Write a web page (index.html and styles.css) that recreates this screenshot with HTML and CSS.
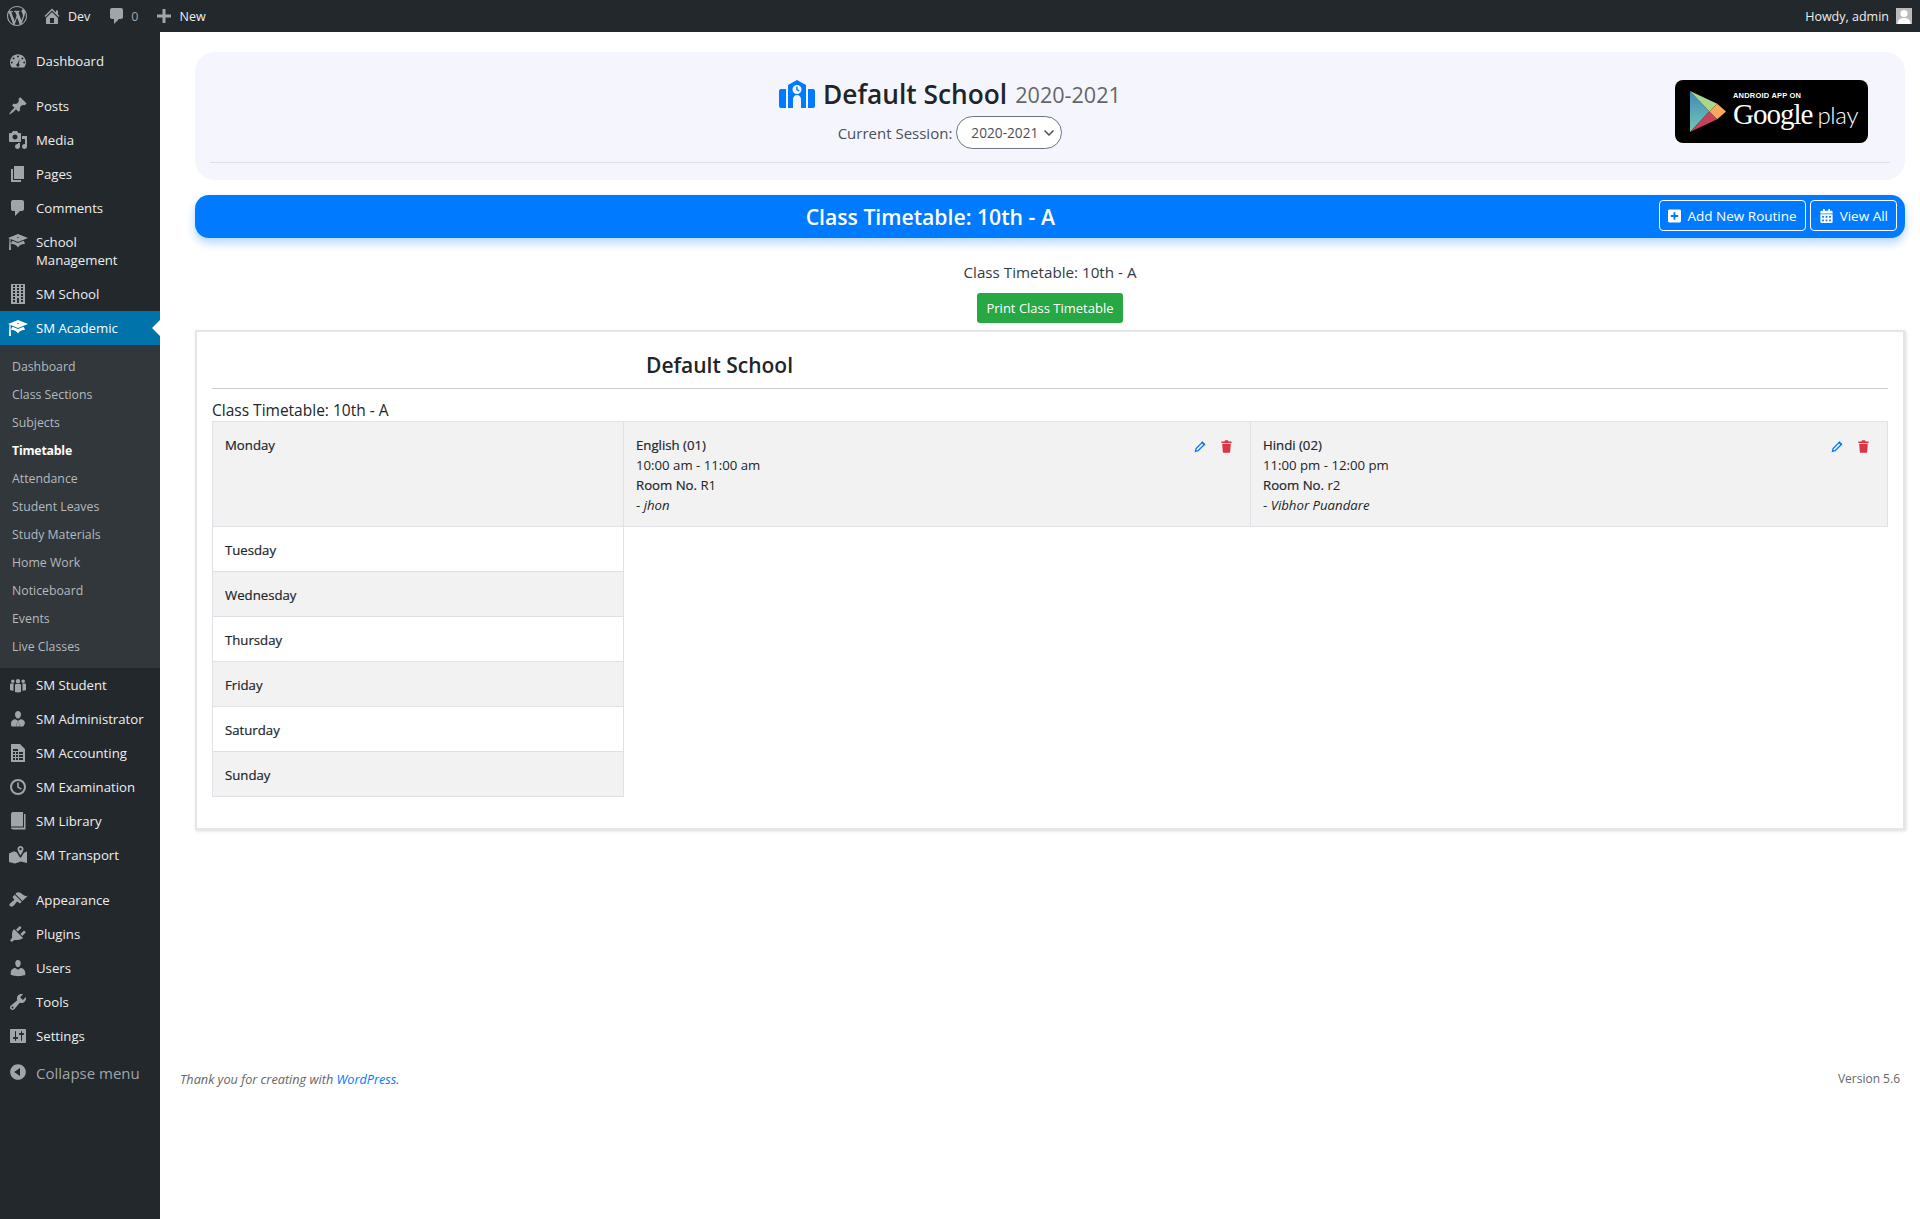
FILE: index.html
```html
<!DOCTYPE html>
<html lang="en">
<head>
    <meta charset="UTF-8">
    <title>Class Timetable</title>
    <link rel="stylesheet" href="styles.css">
</head>
<body>

    <svg class="icon-defs" aria-hidden="true">
        <defs>
            <linearGradient id="play-blue" x1="0" y1="0" x2="0" y2="1">
                <stop offset="0" stop-color="#3f87b8"/>
                <stop offset="1" stop-color="#74c9b4"/>
            </linearGradient>
        </defs>
        <symbol id="i-wp" viewBox="0 0 20 20"><path d="M20 10c0-5.51-4.49-10-10-10C4.48 0 0 4.49 0 10c0 5.52 4.48 10 10 10 5.51 0 10-4.48 10-10zM7.78 15.37L4.37 6.22c.55-.02 1.17-.08 1.17-.08.5-.06.44-1.13-.06-1.11 0 0-1.45.11-2.37.11-.18 0-.37 0-.58-.01C4.12 2.69 6.87 1.11 10 1.11c2.33 0 4.45.87 6.05 2.34-.68-.11-1.65.39-1.65 1.58 0 .74.45 1.36.9 2.1.35.61.55 1.36.55 2.46 0 1.49-1.4 5-1.4 5l-3.03-8.37c.54-.02.82-.17.82-.17.5-.05.44-1.25-.06-1.22 0 0-1.44.12-2.38.12-.87 0-2.33-.12-2.33-.12-.5-.03-.56 1.2-.06 1.22l.92.08 1.26 3.41zM17.41 10c.24-.64.74-1.87.43-4.25.7 1.29 1.05 2.71 1.05 4.25 0 3.29-1.73 6.24-4.4 7.78.97-2.59 1.94-5.2 2.92-7.78zM6.1 18.09C3.12 16.65 1.11 13.53 1.11 10c0-1.3.23-2.48.72-3.59C3.25 10.3 4.67 14.2 6.1 18.09zm4.03-6.63l2.58 6.98c-.86.29-1.76.45-2.71.45-.79 0-1.57-.11-2.29-.33.81-2.38 1.62-4.74 2.42-7.1z"/></symbol>
        <symbol id="i-home" viewBox="0 0 20 20"><path d="M16 8.5l1.53 1.53-1.06 1.06L10 4.62l-6.47 6.47-1.06-1.06L10 2.5l4 4v-2h2v4zm-6-2.46l6 5.99V18H4v-5.97zM12 17v-5H8v5h4z"/></symbol>
        <symbol id="i-comment" viewBox="0 0 20 20"><path d="M5 2h9c1.1 0 2 .9 2 2v7c0 1.1-.9 2-2 2h-2l-5 5v-5H5c-1.1 0-2-.9-2-2V4c0-1.1.9-2 2-2z"/></symbol>
        <symbol id="i-plus" viewBox="0 0 20 20"><path d="M17 8.5v3h-5.500V17h-3v-5.500H3v-3h5.500V3h3v5.500z"/></symbol>
        <symbol id="i-gauge" viewBox="0 0 20 20"><path fill-rule="evenodd" d="M3.8 16.5h12.4c1.1-1.4 1.8-3.2 1.8-5.2 0-4.4-3.6-8-8-8s-8 3.6-8 8c0 2 .7 3.8 1.8 5.2zM10 4.6a1 1 0 1 1 0 2 1 1 0 0 1 0-2zM5.6 6.4a1 1 0 1 1 0 2 1 1 0 0 1 0-2zM14.4 6.4a1 1 0 1 1 0 2 1 1 0 0 1 0-2zM3.8 10.6a1 1 0 1 1 0 2 1 1 0 0 1 0-2zM16.2 10.6a1 1 0 1 1 0 2 1 1 0 0 1 0-2zM11.8 7.8l-.9 4.9a1.6 1.6 0 1 1-1.4-.3z"/></symbol>
        <symbol id="i-pin" viewBox="0 0 20 20"><path d="M10.44 3.02l1.82-1.82 6.36 6.35-1.83 1.82c-1.05-.68-2.48-.57-3.41.36l-.75.75c-.92.93-1.04 2.35-.35 3.41l-1.83 1.82-2.41-2.41-2.8 2.79c-.42.42-3.38 2.71-3.8 2.29s1.86-3.39 2.28-3.81l2.79-2.79L4.1 9.36l1.83-1.82c1.05.69 2.48.57 3.4-.36l.75-.75c.93-.92 1.05-2.35.36-3.41z"/></symbol>
        <symbol id="i-media" viewBox="0 0 20 20"><path d="M13 11V4c0-.55-.45-1-1-1h-1.67L9 1H5L3.67 3H2c-.55 0-1 .45-1 1v7c0 .55.45 1 1 1h10c.55 0 1-.45 1-1zM7 4.5c1.38 0 2.5 1.12 2.5 2.5S8.38 9.5 7 9.5 4.5 8.38 4.5 7 5.62 4.5 7 4.5zM14 6h5v10.5c0 1.38-1.12 2.5-2.5 2.5S14 17.88 14 16.5s1.12-2.5 2.5-2.5c.17 0 .34.02.5.05V9h-3V6zm-4 8.05V13h2v3.5c0 1.38-1.12 2.5-2.5 2.5S7 17.88 7 16.5 8.12 14 9.5 14c.17 0 .34.02.5.05z"/></symbol>
        <symbol id="i-pages" viewBox="0 0 20 20"><path d="M6 15V2h10v13H6zm-1 1h8v2H3V5h2v11z"/></symbol>
        <symbol id="i-cap" viewBox="0 0 20 20"><path d="M10 10L2.54 7.02 3 18H1l.48-11.41L0 6l10-4 10 4zm0-5c-.55 0-1 .22-1 .5s.45.5 1 .5 1-.22 1-.5-.45-.5-1-.5zm0 6l5.57-2.23c.71.94 1.2 2.07 1.36 3.3-.3-.04-.61-.07-.93-.07-2.55 0-4.78 1.37-6 3.41C8.78 13.37 6.55 12 4 12c-.32 0-.63.03-.93.07.16-1.23.65-2.36 1.36-3.3z"/></symbol>
        <symbol id="i-building" viewBox="0 0 20 20"><path fill-rule="evenodd" d="M3 20h14V0H3v20zM7 3H5V1h2v2zm4 0H9V1h2v2zm4 0h-2V1h2v2zM7 6H5V4h2v2zm4 0H9V4h2v2zm4 0h-2V4h2v2zM7 9H5V7h2v2zm4 0H9V7h2v2zm4 0h-2V7h2v2zm-8 3H5v-2h2v2zm4 0H9v-2h2v2zm4 0h-2v-2h2v2zm-4 7H9v-5h2v5zm-4-4H5v-2h2v2zm8 0h-2v-2h2v2zm-8 3H5v-2h2v2zm8 0h-2v-2h2v2z"/></symbol>
        <symbol id="i-groups" viewBox="0 0 20 20"><path d="M10 8.5a2.2 2.2 0 1 0 0-4.4 2.2 2.2 0 0 0 0 4.4zM4.8 8a1.8 1.8 0 1 0 0-3.6 1.8 1.8 0 0 0 0 3.6zM15.2 8a1.8 1.8 0 1 0 0-3.6 1.8 1.8 0 0 0 0 3.6zM7 10c0-.5.6-1 1.200-1h3.600c.6 0 1.200.5 1.200 1v7c-2 .6-4 .6-6 0zM2 9.500c0-.5.5-1 1-1h3c-.3.4-.5.9-.5 1.500v5.800c-1.400-.1-2.600-.4-3.500-.8zM18 9.500c0-.5-.5-1-1-1h-3c.3.4.5.9.5 1.500v5.800c1.400-.1 2.600-.4 3.500-.8z"/></symbol>
        <symbol id="i-man" viewBox="0 0 20 20"><path d="M7 5.500C7 3.500 8.300 2 10 2s3 1.500 3 3.500S11.700 9.500 10 9.500 7 7.500 7 5.500zM3 14.500c0-2.500 1.800-4.300 4.500-4.300l1.700 1-.7 6.300H4.500c-.8 0-1.500-.7-1.500-1.500zM17 14.500c0-2.500-1.800-4.300-4.500-4.300l-1.700 1 .7 6.300h3c.8 0 1.500-.7 1.500-1.500zM9.300 11.500h1.400l.5 6H8.800z"/></symbol>
        <symbol id="i-sheet" viewBox="0 0 20 20"><path fill-rule="evenodd" d="M3 1h9l5 5v13H3zM5 6v2h5V6zM5 9v2h2V9zM8 9v2h2V9zM11 9v2h4V9zM5 12v2h2v-2zM8 12v2h2v-2zM11 12v2h4v-2zM5 15v2h2v-2zM8 15v2h2v-2zM11 15v2h4v-2z"/></symbol>
        <symbol id="i-clock" viewBox="0 0 20 20"><path fill-rule="evenodd" d="M10 2a8 8 0 1 1 0 16 8 8 0 0 1 0-16zm0 2a6 6 0 1 0 0 12 6 6 0 0 0 0-12zM9.200 5.500h1.600v4.200l3 1.800-.8 1.300-3.800-2.300z"/></symbol>
        <symbol id="i-book" viewBox="0 0 20 20"><path d="M3 3a2 2 0 0 1 2-2h10v14.500H3zM3 16.500h13V3h1.500v15.500H5c-1.100 0-2-.9-2-2z"/></symbol>
        <symbol id="i-map" viewBox="0 0 20 20"><path fill-rule="evenodd" d="M12.500 1C10.800 1 9.500 2.400 9.500 4c0 2 3 6.500 3 6.500s3-4.500 3-6.500c0-1.600-1.300-3-3-3zm0 1.800a1.200 1.200 0 1 1 0 2.400 1.200 1.200 0 0 1 0-2.400zM1 8.500l5-2.200 3 1.200c.7 1.600 1.800 3.300 3.500 5.500 1.700-2.200 2.600-3.700 3.300-5.200L19 6.500V18l-6-1.500-6 2L1 17z"/></symbol>
        <symbol id="i-brush" viewBox="0 0 20 20"><path d="M14.48 11.06L7.41 3.99l1.5-1.5c.5-.56 2.3-.47 3.51.32 1.21.8 1.43 1.28 2.91 2.1 1.18.64 2.45 1.26 4.45.85zm-.71.71L6.7 4.7 4.93 6.47c-.39.39-.39 1.02 0 1.41l1.06 1.06c.39.39.39 1.03 0 1.42-.6.6-1.43 1.11-2.21 1.69-.35.26-.7.53-1.01.84C1.43 13.23.76 14.7 2 16c1.26 1.26 2.73.59 4.08-.76.31-.31.58-.66.85-1.02.57-.78 1.08-1.61 1.69-2.21.39-.39 1.02-.39 1.41 0l1.06 1.06c.39.39 1.02.39 1.41 0z"/></symbol>
        <symbol id="i-plug" viewBox="0 0 20 20"><path d="M13.11 4.36L9.87 7.6 8 5.73l3.24-3.24c.35-.34 1.05-.2 1.56.32.52.51.66 1.21.31 1.55zm-8 1.77l.91-1.12 9.01 9.01-1.19.84c-.71.71-2.63 1.16-3.82 1.16H6.14L4.9 17.26c-.59.59-1.54.59-2.12 0-.59-.58-.59-1.53 0-2.12l1.24-1.24v-3.88c0-1.13.4-3.19 1.09-3.89zm7.26 3.97l3.24-3.24c.34-.35 1.04-.21 1.55.31.52.51.66 1.21.31 1.55l-3.24 3.25z"/></symbol>
        <symbol id="i-user" viewBox="0 0 20 20"><path d="M10 9.25c-2.27 0-2.73-3.44-2.73-3.44C7 4.02 7.82 2 9.97 2c2.16 0 2.98 2.02 2.71 3.81 0 0-.41 3.44-2.68 3.44zm0 2.57L12.72 10c2.39 0 4.52 2.33 4.52 4.53v2.49s-3.65 1.13-7.24 1.13c-3.65 0-7.24-1.13-7.24-1.13v-2.49c0-2.25 1.94-4.48 4.47-4.48z"/></symbol>
        <symbol id="i-wrench" viewBox="0 0 20 20"><path d="M16.68 9.77c-1.34 1.34-3.3 1.67-4.95.99l-5.41 6.52c-.99.99-2.59.99-3.58 0s-.99-2.59 0-3.57l6.52-5.42c-.68-1.65-.35-3.61.99-4.95 1.28-1.28 3.12-1.62 4.72-1.06l-2.89 2.89 2.82 2.82 2.86-2.87c.53 1.58.18 3.39-1.08 4.65zM3.81 16.21c.4.39 1.04.39 1.43 0 .4-.4.4-1.04 0-1.43-.39-.4-1.03-.4-1.43 0-.39.39-.39 1.03 0 1.43z"/></symbol>
        <symbol id="i-sliders" viewBox="0 0 20 20"><path d="M18 16V4c0-.55-.45-1-1-1H3c-.55 0-1 .45-1 1v12c0 .55.45 1 1 1h14c.55 0 1-.45 1-1zM8 11h1c.55 0 1 .45 1 1s-.45 1-1 1H8v1.500c0 .28-.22.5-.5.5s-.5-.22-.5-.5V13H6c-.55 0-1-.45-1-1s.45-1 1-1h1V5.500c0-.28.22-.5.5-.5s.5.22.5.5V11zm5-2h-1c-.55 0-1-.45-1-1s.45-1 1-1h1V5.500c0-.28.22-.5.5-.5s.5.22.5.5V7h1c.55 0 1 .45 1 1s-.45 1-1 1h-1v5.500c0 .28-.22.5-.5.5s-.5-.22-.5-.5V9z"/></symbol>
        <symbol id="i-collapse" viewBox="0 0 20 20"><path d="M10 2.16c4.33 0 7.84 3.51 7.84 7.84s-3.51 7.84-7.84 7.84S2.16 14.33 2.16 10 5.71 2.16 10 2.16zm2 11.72V6.12L6.18 9.97z"/></symbol>
        <symbol id="i-pencil" viewBox="0 0 16 16"><path fill="none" stroke="currentColor" stroke-width="1.8" d="M11 2.500l2.800 2.800-8.300 8.300L2 14.500l.8-3.700z"/><path d="M11.200 1l4 4-1.600 1.600-4-4z"/></symbol>
        <symbol id="i-trash" viewBox="0 0 14 16"><path d="M5 0h4l.6 1.500h3.900v2H.5v-2h3.900zM1.500 4.500h11l-.8 10.300c0 .7-.6 1.200-1.300 1.200H3.600c-.7 0-1.300-.5-1.300-1.200z"/></symbol>
    </svg>

    <header class="adminbar">
        <div class="adminbar-left">
            <svg class="bar-logo"><use href="#i-wp"/></svg>
            <span class="bar-item item-site"><svg class="bar-icon"><use href="#i-home"/></svg>Dev</span>
            <span class="bar-item"><svg class="bar-icon icon-tight"><use href="#i-comment"/></svg><span class="bar-count">0</span></span>
            <span class="bar-item"><svg class="bar-icon"><use href="#i-plus"/></svg>New</span>
        </div>
        <div class="howdy">
            Howdy, admin
            <span class="avatar"><svg viewBox="0 0 16 16"><circle cx="8" cy="5.5" r="3.5"/><path d="M1.5 16c0-4 2.500-6 6.500-6s6.500 2 6.500 6z"/></svg></span>
        </div>
    </header>

    <div class="layout">
        <aside class="sidebar">
            <ul class="menu">
                <li class="menu-item first"><svg class="menu-icon"><use href="#i-gauge"/></svg>Dashboard</li>
                <li class="menu-item gap"><svg class="menu-icon"><use href="#i-pin"/></svg>Posts</li>
                <li class="menu-item"><svg class="menu-icon"><use href="#i-media"/></svg>Media</li>
                <li class="menu-item"><svg class="menu-icon"><use href="#i-pages"/></svg>Pages</li>
                <li class="menu-item"><svg class="menu-icon"><use href="#i-comment"/></svg>Comments</li>
                <li class="menu-item tall"><svg class="menu-icon"><use href="#i-cap"/></svg><span>School<br>Management</span></li>
                <li class="menu-item"><svg class="menu-icon"><use href="#i-building"/></svg>SM School</li>
                <li class="menu-item active"><svg class="menu-icon"><use href="#i-cap"/></svg>SM Academic</li>
            </ul>
            <ul class="submenu">
                <li>Dashboard</li>
                <li>Class Sections</li>
                <li>Subjects</li>
                <li class="current">Timetable</li>
                <li>Attendance</li>
                <li>Student Leaves</li>
                <li>Study Materials</li>
                <li>Home Work</li>
                <li>Noticeboard</li>
                <li>Events</li>
                <li>Live Classes</li>
            </ul>
            <ul class="menu">
                <li class="menu-item"><svg class="menu-icon"><use href="#i-groups"/></svg>SM Student</li>
                <li class="menu-item"><svg class="menu-icon"><use href="#i-man"/></svg>SM Administrator</li>
                <li class="menu-item"><svg class="menu-icon"><use href="#i-sheet"/></svg>SM Accounting</li>
                <li class="menu-item"><svg class="menu-icon"><use href="#i-clock"/></svg>SM Examination</li>
                <li class="menu-item"><svg class="menu-icon"><use href="#i-book"/></svg>SM Library</li>
                <li class="menu-item"><svg class="menu-icon"><use href="#i-map"/></svg>SM Transport</li>
                <li class="menu-item gap"><svg class="menu-icon"><use href="#i-brush"/></svg>Appearance</li>
                <li class="menu-item"><svg class="menu-icon"><use href="#i-plug"/></svg>Plugins</li>
                <li class="menu-item"><svg class="menu-icon"><use href="#i-user"/></svg>Users</li>
                <li class="menu-item"><svg class="menu-icon"><use href="#i-wrench"/></svg>Tools</li>
                <li class="menu-item"><svg class="menu-icon"><use href="#i-sliders"/></svg>Settings</li>
                <li class="menu-item collapse"><svg class="menu-icon"><use href="#i-collapse"/></svg>Collapse menu</li>
            </ul>
        </aside>

        <main class="content">
            <section class="school-card">
                <div class="school-row">
                    <div class="school-info">
                        <h1 class="school-title">
                            <svg class="school-icon" viewBox="0 0 36 28"><path fill-rule="evenodd" d="M18 0l9 5v23h-5v-9c0-2.200-1.800-4-4-4s-4 1.800-4 4v9H9V5zm0 5a4.500 4.500 0 1 0 0 9 4.500 4.500 0 0 0 0-9zm-.8 1.800h1.400v2.500l1.800 1-.7 1.100-2.500-1.500zM0 11c0-1 .9-2 2-2h5v19H2c-1.100 0-2-.9-2-2zM36 11c0-1-.9-2-2-2h-5v19h5c1.100 0 2-.9 2-2z"/></svg>
                            Default School <small>2020-2021</small>
                        </h1>
                        <div class="session">
                            <span>Current Session:</span>
                            <span class="session-select">2020-2021
                                <svg viewBox="0 0 12 8"><path d="M1.500 1.500L6 6l4.500-4.500"/></svg>
                            </span>
                        </div>
                    </div>
                    <div class="play-badge">
                        <svg class="play-mark" viewBox="0 0 38 44">
                            <path fill="url(#play-blue)" d="M1 1v42l20-21z"/>
                            <path fill="#a8d88c" d="M1 1l20 21 8-8z"/>
                            <path fill="#c8405c" d="M1 43l20-21 8 8z"/>
                            <path fill="#f9a860" d="M21 22l8-8 9 8-9 8z"/>
                        </svg>
                        <div class="play-text">
                            <span class="play-small">ANDROID APP ON</span>
                            <span class="play-big">Google<span class="play-word">play</span></span>
                        </div>
                    </div>
                </div>
                <hr class="school-rule">
            </section>

            <section class="page-bar">
                <h2 class="page-bar-title">Class Timetable: 10th - A</h2>
                <div class="page-bar-actions">
                    <a class="bar-btn">
                        <svg viewBox="0 0 14 14"><path fill-rule="evenodd" d="M1.500 0h11c.8 0 1.500.7 1.500 1.500v11c0 .8-.7 1.500-1.500 1.500h-11C.7 14 0 13.300 0 12.500v-11C0 .7.700 0 1.500 0zM6 3v3H3v2h3v3h2V8h3V6H8V3z"/></svg>
                        Add New Routine
                    </a>
                    <a class="bar-btn view-all">
                        <svg viewBox="0 0 14 16"><path fill-rule="evenodd" d="M3 0h2v2h4V0h2v2h1.500c.8 0 1.500.7 1.500 1.500V5H0V3.500C0 2.700.7 2 1.500 2H3zM0 6h14v8.500c0 .8-.7 1.500-1.500 1.500h-11C.7 16 0 15.300 0 14.500zM2 8v2h2V8zM6 8v2h2V8zM10 8v2h2V8zM2 12v2h2v-2zM6 12v2h2v-2zM10 12v2h2v-2z"/></svg>
                        View All
                    </a>
                </div>
            </section>

            <div class="print-head">
                <div class="print-label">Class Timetable: 10th - A</div>
                <a class="print-btn">Print Class Timetable</a>
            </div>

            <section class="timetable-card">
                <h3 class="timetable-school">Default School</h3>
                <div class="timetable-label">Class Timetable: 10th - A</div>
                <table class="timetable">
                    <colgroup>
                        <col class="col-day">
                        <col class="col-slot">
                        <col>
                    </colgroup>
                    <tr class="striped">
                        <th>Monday</th>
                        <td>
                            <div class="slot-actions">
                                <svg class="act-edit"><use href="#i-pencil"/></svg>
                                <svg class="act-del"><use href="#i-trash"/></svg>
                            </div>
                            <div class="slot-name">English (01)</div>
                            <div>10:00 am - 11:00 am</div>
                            <div><span class="slot-name">Room No.</span> R1</div>
                            <div>- <em>jhon</em></div>
                        </td>
                        <td>
                            <div class="slot-actions">
                                <svg class="act-edit"><use href="#i-pencil"/></svg>
                                <svg class="act-del"><use href="#i-trash"/></svg>
                            </div>
                            <div class="slot-name">Hindi (02)</div>
                            <div>11:00 pm - 12:00 pm</div>
                            <div><span class="slot-name">Room No.</span> r2</div>
                            <div>- <em>Vibhor Puandare</em></div>
                        </td>
                    </tr>
                    <tr><th>Tuesday</th></tr>
                    <tr class="striped"><th>Wednesday</th></tr>
                    <tr><th>Thursday</th></tr>
                    <tr class="striped"><th>Friday</th></tr>
                    <tr><th>Saturday</th></tr>
                    <tr class="striped"><th>Sunday</th></tr>
                </table>
            </section>

            <footer class="page-footer">
                <span class="thanks">Thank you for creating with <a>WordPress</a>.</span>
                <span class="version">Version 5.6</span>
            </footer>
        </main>
    </div>

</body>
</html>
```

FILE: styles.css
```css
* {
    box-sizing: border-box;
}
body {
    margin: 0;
    font-family: 'Open Sans', 'Noto Sans', sans-serif;
    font-size: 13.2px;
    color: #212529;
    background: #fff;
}
.icon-defs {
    position: absolute;
    width: 0;
    height: 0;
}
ul {
    list-style: none;
    margin: 0;
    padding: 0;
}

/* admin bar */
.adminbar {
    height: 32px;
    background: #23282d;
    color: #eee;
    display: flex;
    justify-content: space-between;
    align-items: center;
    font-size: 12.5px;
}
.adminbar-left {
    display: flex;
    align-items: center;
}
.bar-logo {
    width: 20px;
    height: 20px;
    margin: 0 15px 0 7px;
    fill: #a0a5aa;
}
.bar-item {
    display: flex;
    align-items: center;
    margin-right: 15px;
}
.item-site {
    margin-right: 17px;
}
.bar-icon {
    width: 20px;
    height: 20px;
    margin-right: 6px;
    fill: #a0a5aa;
}
.icon-tight {
    margin-right: 4px;
}
.bar-count {
    color: #a0a5aa;
}
.howdy {
    display: flex;
    align-items: center;
    gap: 7px;
    padding-right: 8px;
}
.avatar {
    width: 16px;
    height: 16px;
    background: #bbb;
    display: block;
}
.avatar svg {
    display: block;
    fill: #fff;
}

/* sidebar */
.layout {
    display: flex;
    min-height: 1187px;
}
.sidebar {
    width: 160px;
    flex: none;
    background: #23282d;
    color: #eee;
}
.menu-item {
    position: relative;
    display: flex;
    align-items: center;
    height: 34px;
    padding-left: 36px;
}
.menu-item.first {
    margin-top: 12px;
}
.menu-item.gap {
    margin-top: 11px;
}
.menu-item.tall {
    height: 52px;
    line-height: 18px;
}
.menu-icon {
    position: absolute;
    left: 8px;
    top: 7px;
    width: 20px;
    height: 20px;
    fill: #a0a5aa;
}
.menu-item.active {
    background: #0073aa;
    color: #fff;
}
.menu-item.active .menu-icon {
    fill: #fff;
}
.menu-item.active::after {
    content: "";
    position: absolute;
    right: 0;
    top: 9px;
    border: 8px solid transparent;
    border-right-color: #fff;
    border-left-width: 0;
}
.menu-item.collapse {
    height: 40px;
    font-size: 15px;
    color: #a0a5aa;
}
.menu-item.collapse .menu-icon {
    top: 9px;
}
.submenu {
    background: #32373c;
    padding: 8px 0 7px;
}
.submenu li {
    height: 28px;
    line-height: 28px;
    padding-left: 12px;
    font-size: 12.3px;
    color: #b4b9be;
}
.submenu li.current {
    color: #fff;
    font-weight: 700;
    letter-spacing: -.2px;
}

/* main column */
.content {
    flex: 1;
    min-width: 0;
    padding: 20px 15px 0 35px;
    display: flex;
    flex-direction: column;
}
.school-card {
    height: 128px;
    background: #f5f6fd;
    border-radius: 20px;
    padding: 20px 15px 0;
}
.school-row {
    display: flex;
    justify-content: space-between;
    height: 90px;
}
.school-info {
    flex: 1;
    text-align: center;
    padding-left: 15px;
}
.school-title {
    margin: 3px 0 0;
    font-size: 26.3px;
    font-weight: 600;
    line-height: 36px;
    color: #212529;
    display: flex;
    justify-content: center;
    align-items: center;
    gap: 8px;
}
.school-title small {
    font-size: 21.6px;
    font-weight: 400;
    color: #666;
    margin-top: 2px;
}
.school-icon {
    width: 36px;
    height: 28px;
    fill: #007bff;
}
.session {
    margin-top: 3px;
    display: flex;
    justify-content: center;
    align-items: center;
    gap: 4px;
    font-size: 15px;
    color: #495057;
}
.session-select {
    display: flex;
    align-items: center;
    gap: 5px;
    height: 33px;
    padding: 0 6px 0 14px;
    background: #fff;
    border: 1px solid #6c757d;
    border-radius: 17px;
    font-size: 13.7px;
    color: #495057;
}
.session-select svg {
    width: 12px;
    height: 8px;
    fill: none;
    stroke: #495057;
    stroke-width: 1.5;
}
.play-badge {
    width: 193px;
    height: 63px;
    margin: 8px 22px 0 0;
    background: #000;
    border-radius: 8px;
    color: #fff;
    display: flex;
    align-items: center;
    padding-left: 14px;
    gap: 7px;
}
.play-mark {
    width: 37px;
    height: 43px;
}
.play-text {
    display: flex;
    flex-direction: column;
    margin-top: -4px;
}
.play-small {
    font-family: 'Liberation Sans', sans-serif;
    font-size: 7.5px;
    font-weight: 700;
    letter-spacing: .2px;
    line-height: 9px;
}
.play-big {
    font-family: 'Liberation Serif', serif;
    font-size: 29px;
    font-weight: 400;
    line-height: 28px;
    letter-spacing: -1px;
}
.play-word {
    font-family: 'Lato', sans-serif;
    font-size: 24px;
    font-weight: 300;
    margin-left: 5px;
    letter-spacing: -.3px;
}
.school-rule {
    margin: 0;
    border: 0;
    border-top: 1px solid #dfe1ea;
}
.page-bar {
    margin-top: 15px;
    height: 43px;
    background: #007bff;
    border-radius: 14px;
    box-shadow: 0 5px 10px rgba(0, 123, 255, .3);
    display: flex;
    padding-right: 8px;
    color: #fff;
}
.page-bar-title {
    flex: 1;
    margin: 0;
    padding-left: 7px;
    text-align: center;
    font-size: 21.2px;
    font-weight: 600;
    line-height: 43px;
}
.page-bar-actions {
    display: flex;
    gap: 4px;
    padding-top: 5px;
}
.bar-btn {
    display: flex;
    align-items: center;
    gap: 7px;
    height: 31px;
    padding: 0 8px;
    border: 1px solid #fff;
    border-radius: 4px;
    font-size: 13.5px;
}
.bar-btn.view-all {
    padding-left: 9px;
}
.bar-btn svg {
    width: 13px;
    height: 14px;
    fill: #fff;
}
.print-head {
    text-align: center;
    margin-top: 24px;
    font-size: 15.2px;
    color: #343a40;
}
.print-label {
    line-height: 21px;
}
.print-btn {
    display: inline-block;
    margin-top: 10px;
    height: 30px;
    line-height: 30px;
    padding: 0 9px;
    background: #28a745;
    color: #fff;
    border-radius: 3px;
    font-size: 13px;
}
.timetable-card {
    margin-top: 7px;
    height: 500px;
    border: 2px solid #e6e6e6;
    box-shadow: 1px 1px 3px rgba(0, 0, 0, .15);
    padding: 0 15px;
}
.timetable-school {
    margin: 0;
    height: 57px;
    padding: 10px 0 0 434px;
    line-height: 46px;
    font-size: 21px;
    font-weight: 600;
    border-bottom: 1px solid #ccc;
}
.timetable-label {
    margin-top: 11px;
    font-size: 15.5px;
    line-height: 21px;
}
.timetable {
    width: 100%;
    table-layout: fixed;
    border-collapse: collapse;
    font-size: 13.2px;
}
.col-day {
    width: 411px;
}
.col-slot {
    width: 627px;
}
.timetable th,
.timetable td {
    border: 1px solid #dee2e6;
    padding: 13px 12px 11px;
    text-align: left;
    vertical-align: top;
    font-weight: 400;
    line-height: 20px;
}
.timetable th,
.slot-name {
    -webkit-text-stroke: .2px currentColor;
}
.timetable tr {
    height: 45px;
}
.striped th,
.striped td {
    background: #f2f2f2;
}
.slot-actions {
    float: right;
    display: flex;
    gap: 15px;
    padding: 5px 6px 0 0;
}
.act-edit {
    width: 12px;
    height: 13px;
    color: #007bff;
    fill: #007bff;
}
.act-del {
    width: 11px;
    height: 13px;
    fill: #dc3545;
}
.page-footer {
    margin: 240px 0 0 -15px;
    display: flex;
    justify-content: space-between;
    padding-right: 5px;
    font-size: 12px;
    color: #666;
}
.thanks {
    font-size: 12.7px;
    font-style: italic;
}
.thanks a {
    color: #007bff;
}
```
